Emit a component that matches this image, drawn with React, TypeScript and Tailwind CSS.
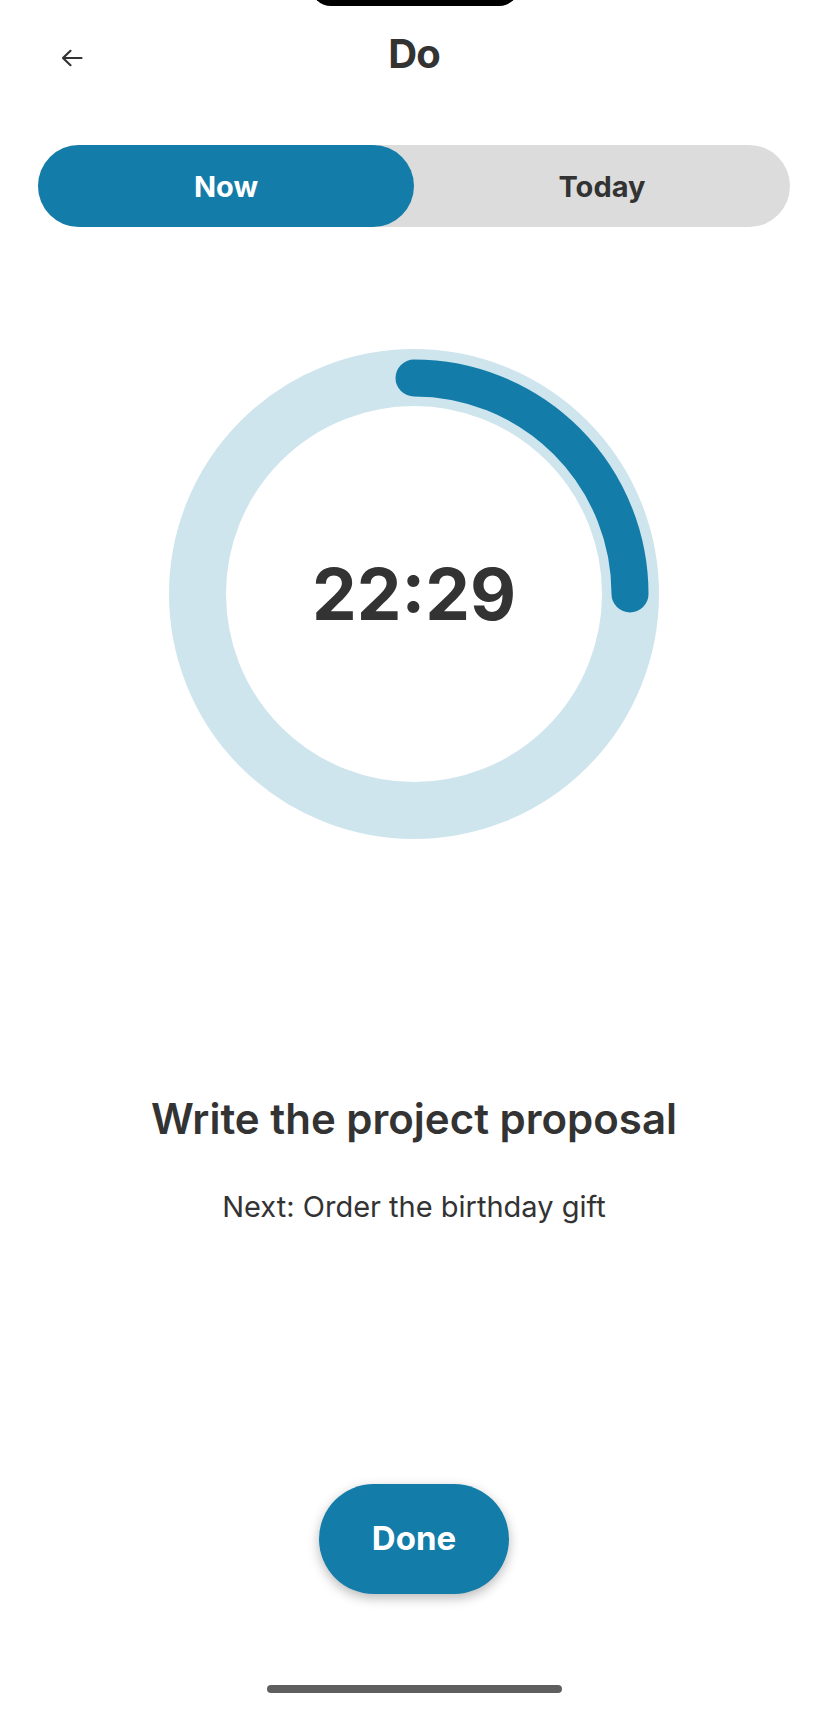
import React from 'react';

const BLUE = '#137ca8';

function BackArrow() {
  return (
    <svg width="22" height="18" viewBox="0 0 22 18" fill="none">
      <path
        d="M20.5 9H2M9.5 1.8L2 9l7.5 7.2"
        stroke="#333333"
        strokeWidth="2.2"
        strokeLinecap="round"
        strokeLinejoin="round"
      />
    </svg>
  );
}

function TimerRing() {
  return (
    <div className="relative h-[490px] w-[490px]">
      <svg width="490" height="490" viewBox="0 0 490 490">
        <circle cx="245" cy="245" r="216.5" fill="none" stroke="#cfe5ee" strokeWidth="57" />
        <path
          d="M245 29 A216 216 0 0 1 461 245"
          fill="none"
          stroke={BLUE}
          strokeWidth="37"
          strokeLinecap="round"
        />
      </svg>
      {/* 남은 시간 */}
      <div className="absolute inset-0 flex items-center justify-center">
        <span className="text-[71px] font-bold leading-none text-[#333333]">22:29</span>
      </div>
    </div>
  );
}

export default function App() {
  return (
    <div
      className="relative flex h-[1709px] w-[828px] flex-col items-center overflow-hidden bg-white"
      style={{ fontFamily: 'Inter, "Noto Sans", sans-serif' }}
    >
      {/* 노치 */}
      <div className="absolute left-[311px] top-[-34px] h-[40px] w-[208px] rounded-[22px] bg-black" />

      {/* 헤더 */}
      <div className="relative flex h-[108px] w-full items-center justify-center">
        <button className="absolute left-[61px] top-[49px] flex items-center">
          <BackArrow />
        </button>
        <h1 className="text-[40px] font-bold tracking-tight text-[#333333]">Do</h1>
      </div>

      {/* 탭 */}
      <div className="mt-[37px] grid h-[82px] w-[752px] grid-cols-2 rounded-full bg-[#dcdcdc]">
        <button
          className="flex items-center justify-center rounded-full pt-[2px] text-[29px] font-bold text-white"
          style={{ backgroundColor: BLUE }}
        >
          Now
        </button>
        <button className="flex items-center justify-center pt-[2px] text-[29px] font-bold text-[#333333]">
          Today
        </button>
      </div>

      <div className="mt-[122px]">
        <TimerRing />
      </div>

      {/* 현재 할 일 */}
      <h2 className="mt-[258px] h-[44px] text-[42px] font-semibold leading-[44px] text-[#333333]">
        Write the project proposal
      </h2>
      <p className="mt-[50px] h-[32px] text-[29px] leading-[32px] text-[#333333]">Next: Order the birthday gift</p>

      <button
        className="mt-[261px] flex h-[110px] w-[190px] items-center justify-center rounded-full text-[33px] font-bold text-white shadow-[0_4px_12px_rgba(0,0,0,0.28)]"
        style={{ backgroundColor: BLUE }}
      >
        Done
      </button>

      <div className="mt-[91px] h-[8px] w-[295px] rounded-full bg-[#5f5f5f]" />
    </div>
  );
}
